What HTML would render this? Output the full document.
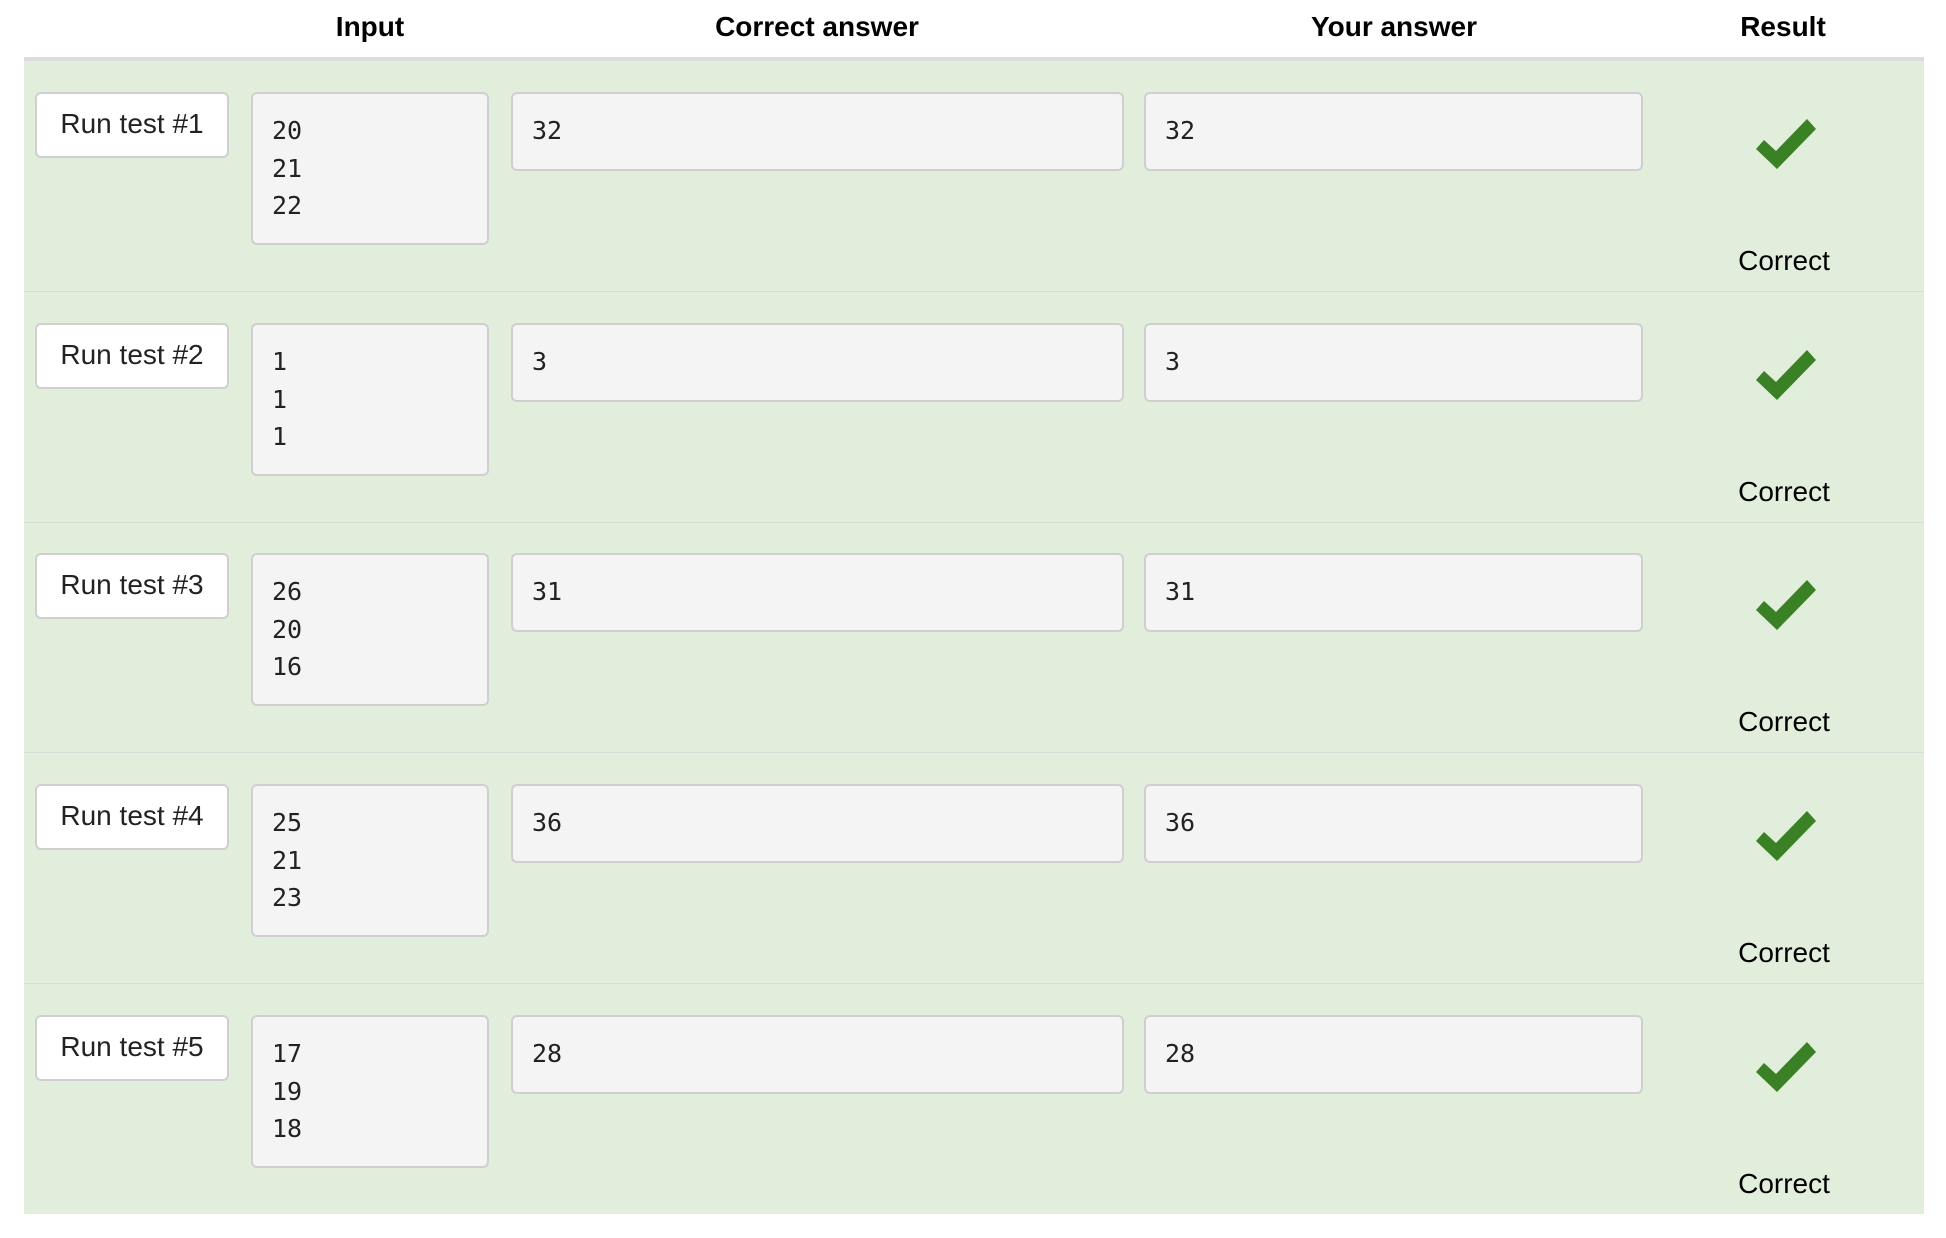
<!DOCTYPE html>
<html><head><meta charset="utf-8"><style>
*{box-sizing:border-box;margin:0;padding:0}
body{width:1946px;height:1238px;background:#fff;position:relative;overflow:hidden;font-family:"Liberation Sans",Arial,sans-serif;color:#000}
.h{position:absolute;top:9px;font-weight:bold;font-size:28px;line-height:36px;text-align:center;transform:translateX(-50%);white-space:nowrap}
.hb{position:absolute;left:24px;width:1900px;top:57px;height:4px;background:#dcdcdc}
.row{position:absolute;left:24px;width:1900px;height:231px;background:#e1eedb}
.sep{position:absolute;left:24px;width:1900px;height:1px;background:#d6dcd3}
.btn{position:absolute;left:11px;top:31px;width:194px;height:66px;background:#fff;border:2px solid #cfcfcf;border-radius:6px;font-size:28px;color:#222;text-align:center;line-height:60px;white-space:nowrap}
.box{position:absolute;top:31px;background:#f4f4f4;border:2px solid #cfcfcf;border-radius:6px;font-family:"DejaVu Sans Mono","Liberation Mono",monospace;font-size:25px;color:#222;padding:18px 0 0 19px;line-height:37.5px}
.in{left:227px;width:238px;height:153px}
.ca{left:487px;width:613px;height:79px}
.ya{left:1120px;width:499px;height:79px}
.ck{position:absolute;left:1732px;top:58px}
.ct{position:absolute;left:1705px;width:110px;text-align:center;top:182px;font-size:28px;line-height:36px}
</style></head><body>
<div class="h" style="left:370px">Input</div>
<div class="h" style="left:817px">Correct answer</div>
<div class="h" style="left:1394px">Your answer</div>
<div class="h" style="left:1783px">Result</div>
<div class="hb"></div>

<div class="row" style="top:61px"><div class="btn">Run test #1</div><div class="box in">20<br>21<br>22</div><div class="box ca">32</div><div class="box ya">32</div><svg class="ck" width="70" height="60" viewBox="1732 119 70 60"><polygon points="1756,149 1764,140 1776,151 1807,119 1816,129 1777,169" fill="#3a8024" transform="translate(-24,0)"/></svg><div class="ct">Correct</div></div>

<div class="row" style="top:292px"><div class="btn">Run test #2</div><div class="box in">1<br>1<br>1</div><div class="box ca">3</div><div class="box ya">3</div><svg class="ck" width="70" height="60" viewBox="1732 119 70 60"><polygon points="1756,149 1764,140 1776,151 1807,119 1816,129 1777,169" fill="#3a8024" transform="translate(-24,0)"/></svg><div class="ct">Correct</div></div>

<div class="row" style="top:522px"><div class="btn">Run test #3</div><div class="box in">26<br>20<br>16</div><div class="box ca">31</div><div class="box ya">31</div><svg class="ck" width="70" height="60" viewBox="1732 119 70 60"><polygon points="1756,149 1764,140 1776,151 1807,119 1816,129 1777,169" fill="#3a8024" transform="translate(-24,0)"/></svg><div class="ct">Correct</div></div>

<div class="row" style="top:753px"><div class="btn">Run test #4</div><div class="box in">25<br>21<br>23</div><div class="box ca">36</div><div class="box ya">36</div><svg class="ck" width="70" height="60" viewBox="1732 119 70 60"><polygon points="1756,149 1764,140 1776,151 1807,119 1816,129 1777,169" fill="#3a8024" transform="translate(-24,0)"/></svg><div class="ct">Correct</div></div>

<div class="row" style="top:984px;height:230px"><div class="btn">Run test #5</div><div class="box in">17<br>19<br>18</div><div class="box ca">28</div><div class="box ya">28</div><svg class="ck" width="70" height="60" viewBox="1732 119 70 60"><polygon points="1756,149 1764,140 1776,151 1807,119 1816,129 1777,169" fill="#3a8024" transform="translate(-24,0)"/></svg><div class="ct">Correct</div></div>

<div class="sep" style="top:291px"></div>
<div class="sep" style="top:522px"></div>
<div class="sep" style="top:752px"></div>
<div class="sep" style="top:983px"></div>
</body></html>
